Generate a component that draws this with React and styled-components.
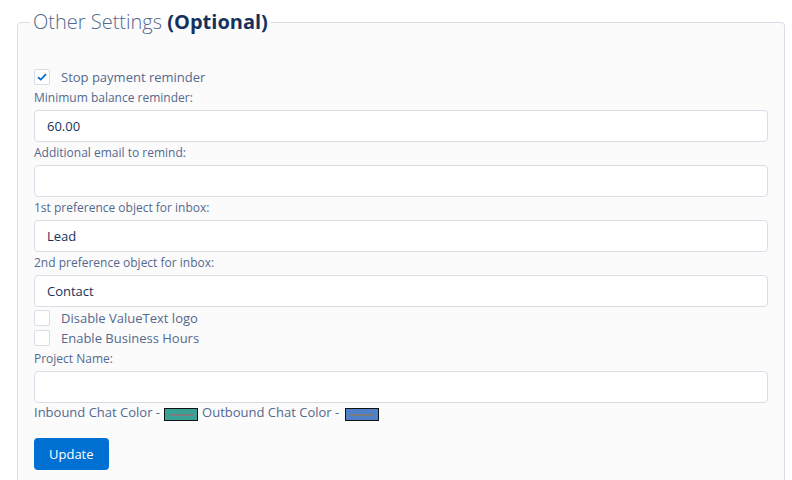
import React, { useState } from "react";
import styled, { createGlobalStyle } from "styled-components";

const Global = createGlobalStyle`
  body {
    margin: 0;
    background: #ffffff;
    font-family: "Open Sans", "Liberation Sans", sans-serif;
  }
`;

const Page = styled.div`
  padding: 0 7px 0 17px;
`;

const Fieldset = styled.fieldset`
  margin: 10px 0 0;
  padding: 0 0 20px;
  border: 1px solid #d8dde6;
  border-radius: 4px;
  background: #fbfbfc;
  min-width: 0;
`;

const Legend = styled.legend`
  margin-left: 12px;
  padding: 0 3px;
  font-size: 20px;
  line-height: 24px;
  font-weight: 300;
  color: #54698d;

  b {
    font-weight: 700;
    color: #16325c;
  }
`;

const Body = styled.div`
  display: flex;
  flex-direction: column;
  padding: 33px 16px 0;
`;

const CheckRow = styled.label`
  display: flex;
  align-items: center;
  height: 20px;
  font-size: 13px;
  color: #54698d;
  cursor: pointer;
`;

const Box = styled.span`
  width: 16px;
  height: 16px;
  box-sizing: border-box;
  border: 1px solid #d8dde6;
  border-radius: 2px;
  background: #fff;
  margin-right: 11px;
  display: flex;
  align-items: center;
  justify-content: center;
`;

const Label = styled.div`
  font-size: 12px;
  line-height: 17px;
  color: #54698d;
  padding-top: 2px;
  margin-bottom: 4px;
`;

const Input = styled.input`
  box-sizing: border-box;
  width: 100%;
  height: 32px;
  border: 1px solid #d8dde6;
  border-radius: 4px;
  background: #fff;
  padding: 0 12px;
  font-family: inherit;
  font-size: 13px;
  color: #16325c;
  outline: none;
`;

const Field = styled.div`
  display: flex;
  flex-direction: column;
  margin-bottom: ${(p) => p.gap || 0}px;
`;

const ColorLine = styled.div`
  display: flex;
  align-items: center;
  height: 18px;
  font-size: 13px;
  color: #54698d;
  white-space: pre;
`;

const Swatch = styled.span`
  display: inline-block;
  position: relative;
  width: 34px;
  height: 13px;
  box-sizing: border-box;
  border: 1px solid #111;
  background: ${(p) => p.color};
  margin: 4px 4px 0 ${(p) => p.offset || 4}px;

  &::after {
    content: "";
    position: absolute;
    left: 4px;
    right: 4px;
    top: 5px;
    height: 2px;
    background: #7b7b7b;
  }
`;

const Button = styled.button`
  align-self: flex-start;
  margin-top: 17px;
  height: 32px;
  padding: 0 15px;
  border: none;
  border-radius: 4px;
  background: #0070d2;
  color: #fff;
  font-family: inherit;
  font-size: 13px;
  cursor: pointer;
`;

const Check = () => (
  <svg width="10" height="8" viewBox="0 0 10 8">
    <path d="M1 4.2 L3.8 6.6 L9 1.2" fill="none" stroke="#0070d2" strokeWidth="1.8" />
  </svg>
);

const CheckBox = ({ label, checked, onToggle }) => (
  <CheckRow onClick={onToggle}>
    <Box>{checked && <Check />}</Box>
    {label}
  </CheckRow>
);

export default function App() {
  const [stop, setStop] = useState(true);
  const [logo, setLogo] = useState(false);
  const [hours, setHours] = useState(false);

  return (
    <Page>
      <Global />
      <Fieldset>
        <Legend>
          Other Settings <b>(Optional)</b>
        </Legend>
        <Body>
          <CheckBox label="Stop payment reminder" checked={stop} onToggle={() => setStop(!stop)} />
          <Field>
            <Label>Minimum balance reminder:</Label>
            <Input defaultValue="60.00" />
          </Field>
          <Field>
            <Label>Additional email to remind:</Label>
            <Input />
          </Field>
          <Field>
            <Label>1st preference object for inbox:</Label>
            <Input defaultValue="Lead" />
          </Field>
          <Field gap={1}>
            <Label>2nd preference object for inbox:</Label>
            <Input defaultValue="Contact" />
          </Field>
          <CheckBox label="Disable ValueText logo" checked={logo} onToggle={() => setLogo(!logo)} />
          <CheckBox label="Enable Business Hours" checked={hours} onToggle={() => setHours(!hours)} />
          <Field>
            <Label>Project Name:</Label>
            <Input />
          </Field>
          <ColorLine>
            Inbound Chat Color -<Swatch color="#3aa197" />Outbound Chat Color -<Swatch color="#4f80c8" offset={6} />
          </ColorLine>
          <Button>Update</Button>
        </Body>
      </Fieldset>
    </Page>
  );
}
